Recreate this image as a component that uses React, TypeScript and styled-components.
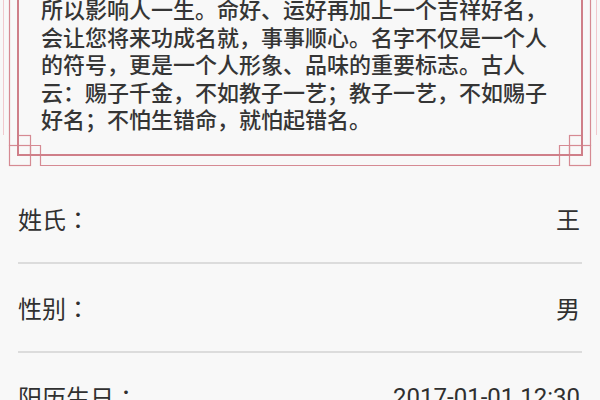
import React from "react"
import styled, { createGlobalStyle } from "styled-components"

const GlobalStyle = createGlobalStyle`
  html, body {
    margin: 0;
    padding: 0;
    background: #f8f8f8;
    overflow: hidden;
  }
`

const introLines = [
  "所以影响人一生。命好、运好再加上一个吉祥好名，",
  "会让您将来功成名就，事事顺心。名字不仅是一个人",
  "的符号，更是一个人形象、品味的重要标志。古人",
  "云：赐子千金，不如教子一艺；教子一艺，不如赐子",
  "好名；不怕生错命，就怕起错名。",
]

const infoRows = [
  { label: "姓氏：", value: "王" },
  { label: "性别：", value: "男" },
  { label: "阳历生日：", value: "2017-01-01 12:30" },
]

const FramePanel = styled.section`
  position: relative;
  margin-top: -5px;
  padding: 0 40px 37.5px 41px;
`

const FrameArt = styled.svg`
  position: absolute;
  inset: 0;
  width: 100%;
  height: 100%;
  pointer-events: none;
`

const Intro = styled.p`
  position: relative;
  margin: 0;
  font-family: "Noto Sans CJK SC", sans-serif;
  font-size: 22px;
  font-weight: 500;
  line-height: 27.5px;
  color: #353535;
`

const IntroLine = styled.span`
  display: block;
  white-space: nowrap;
`

const InfoList = styled.div`
  margin: 5px 18px 0;
`

const InfoRow = styled.div`
  display: flex;
  align-items: center;
  justify-content: space-between;
  height: 87px;
  border-bottom: 2px solid #dcdcdc;
  font-family: Roboto, "Noto Sans CJK TC", sans-serif;
  font-size: 24px;
  color: #303030;
`

const Label = styled.span``

const Value = styled.span`
  padding-right: 2px;
`

const Frame = () => (
  <FrameArt viewBox="0 0 600 175" preserveAspectRatio="none">
    <g fill="none" stroke="#f1c9ce" strokeWidth="1">
      <path d="M3.5 0 V140 M596.5 0 V140" />
    </g>
    <g fill="none" stroke="#d68a93" strokeWidth="1.2">
      <path d="M9.5 0 V150.5 H40.5 V170.5 H559.5 V150.5 H590.5 V0" />
      <rect x="9.5" y="150.5" width="21" height="20" />
      <rect x="18" y="140.5" width="12.5" height="19.5" />
      <rect x="569.5" y="150.5" width="21" height="20" />
      <rect x="569.5" y="140.5" width="12.5" height="19.5" />
    </g>
    <path d="M18 0 V160 H582 V0" fill="none" stroke="#cf7f89" strokeWidth="2" />
  </FrameArt>
)

export default function App() {
  return (
    <>
      <GlobalStyle />
      <FramePanel>
        <Frame />
        <Intro>
          {introLines.map((line) => (
            <IntroLine key={line}>{line}</IntroLine>
          ))}
        </Intro>
      </FramePanel>
      <InfoList>
        {infoRows.map((row) => (
          <InfoRow key={row.label}>
            <Label>{row.label}</Label>
            <Value>{row.value}</Value>
          </InfoRow>
        ))}
      </InfoList>
    </>
  )
}
